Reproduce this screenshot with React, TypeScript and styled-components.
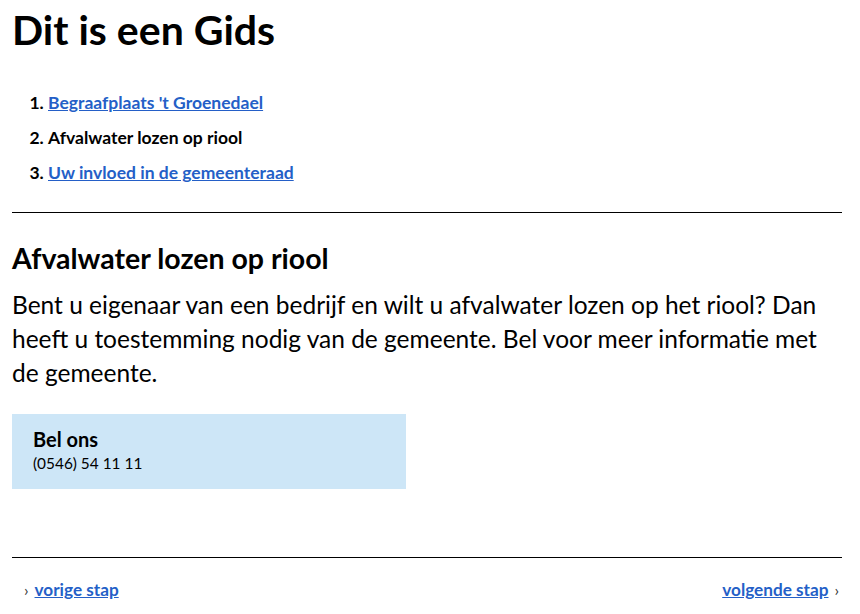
import React from "react";
import styled, { createGlobalStyle } from "styled-components";

const Global = createGlobalStyle`
  html, body { margin: 0; padding: 0; background: #fff; }
  body { font-family: Lato, "Liberation Sans", sans-serif; color: #000; }
`;

const Page = styled.div`
  padding: 6px 18px 0 12px;
`;

const Title = styled.h1`
  margin: 0;
  font-size: 41px;
  line-height: 48px;
  font-weight: 700;
`;

const Steps = styled.ol`
  margin: 31px 0 0;
  padding: 0 0 0 36px;
`;

const Step = styled.li`
  font-size: 17.5px;
  line-height: 35px;
  font-weight: 700;
`;

const Link = styled.a`
  color: #245fc7;
  text-decoration: underline;
  font-weight: 700;
`;

const Rule = styled.hr<{ $top: number }>`
  margin: ${(p) => p.$top}px 0 0;
  border: 0;
  border-top: 1px solid #000;
  height: 0;
`;

const Heading = styled.h2`
  margin: 28px 0 0;
  font-size: 28.5px;
  line-height: 34px;
  font-weight: 700;
`;

const Body = styled.p`
  margin: 13px 0 0;
  font-size: 24.5px;
  line-height: 34px;
`;

const Callout = styled.div`
  margin-top: 24px;
  width: 394px;
  box-sizing: border-box;
  height: 75px;
  padding: 13px 21px 0;
  background: #cde6f7;
`;

const CalloutTitle = styled.div`
  font-size: 20px;
  line-height: 24px;
  font-weight: 700;
`;

const CalloutText = styled.div`
  margin-top: 2px;
  font-size: 15.4px;
  line-height: 20px;
`;

const Footer = styled.nav`
  display: flex;
  justify-content: space-between;
  margin-top: 22px;
  padding: 0 3px 0 12px;
  font-size: 17.2px;
  line-height: 20px;
`;

const Pager = styled.span`
  display: inline-flex;
  align-items: baseline;
  gap: 6px;
`;

const Chevron = styled.span`
  color: #333;
  font-size: 16px;
`;

export default function App() {
  return (
    <>
      <Global />
      <Page>
        <Title>Dit is een Gids</Title>
        <Steps>
          <Step>
            <Link href="#">Begraafplaats 't Groenedael</Link>
          </Step>
          <Step>Afvalwater lozen op riool</Step>
          <Step>
            <Link href="#">Uw invloed in de gemeenteraad</Link>
          </Step>
        </Steps>
        <Rule $top={22} />
        <Heading>Afvalwater lozen op riool</Heading>
        <Body>
          Bent u eigenaar van een bedrijf en wilt u afvalwater lozen op het riool? Dan heeft u
          toestemming nodig van de gemeente. Bel voor meer informatie met de gemeente.
        </Body>
        <Callout>
          <CalloutTitle>Bel ons</CalloutTitle>
          <CalloutText>(0546) 54 11 11</CalloutText>
        </Callout>
        <Rule $top={68} />
        <Footer>
          <Pager>
            <Chevron>›</Chevron>
            <Link href="#">vorige stap</Link>
          </Pager>
          <Pager>
            <Link href="#">volgende stap</Link>
            <Chevron>›</Chevron>
          </Pager>
        </Footer>
      </Page>
    </>
  );
}
